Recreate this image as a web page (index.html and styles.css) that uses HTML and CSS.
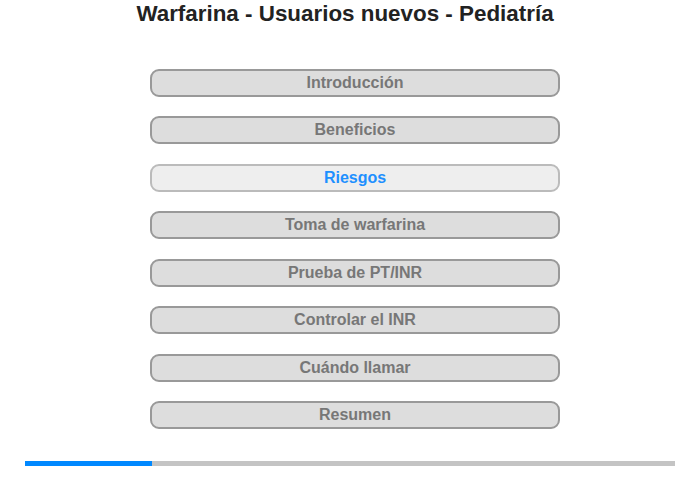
FILE: index.html
```html
<!DOCTYPE html>
<html lang="es">
<head>
<meta charset="utf-8">
<title>Warfarina - Usuarios nuevos - Pediatría</title>
<link rel="stylesheet" href="styles.css">
</head>
<body>
<h1 class="title">Warfarina - Usuarios nuevos - Pediatría</h1>
<nav class="menu">
  <div class="item">Introducción</div>
  <div class="item">Beneficios</div>
  <div class="item active">Riesgos</div>
  <div class="item">Toma de warfarina</div>
  <div class="item">Prueba de PT/INR</div>
  <div class="item">Controlar el INR</div>
  <div class="item">Cuándo llamar</div>
  <div class="item">Resumen</div>
</nav>
<div class="progress"><div class="progress-fill" style="width:127px"></div></div>
</body>
</html>
```
FILE: styles.css
```css
html, body {
  margin: 0;
  padding: 0;
  background: #fff;
  font-family: "Liberation Sans", Arial, sans-serif;
}
.title {
  margin: 0;
  padding-top: 0;
  height: 28px;
  line-height: 28px;
  font-size: 22.4px;
  font-weight: bold;
  color: #222;
  text-align: center;
  padding-right: 10px;
}
.menu {
  display: flex;
  flex-direction: column;
  gap: 19.43px;
  width: 410px;
  margin: 41px 0 0 150px;
}
.item {
  box-sizing: border-box;
  height: 28px;
  border: 2px solid #999;
  border-radius: 9px;
  background: #ddd;
  color: #777;
  font-size: 16px;
  font-weight: bold;
  line-height: 24px;
  text-align: center;
}
.item.active {
  background: #eee;
  border-color: #bbb;
  color: #1e90ff;
}
.progress {
  height: 5px;
  width: 650px;
  margin: 32px 0 0 25px;
  background: #c4c4c4;
}
.progress-fill {
  height: 100%;
  background: #0088ff;
}
```
